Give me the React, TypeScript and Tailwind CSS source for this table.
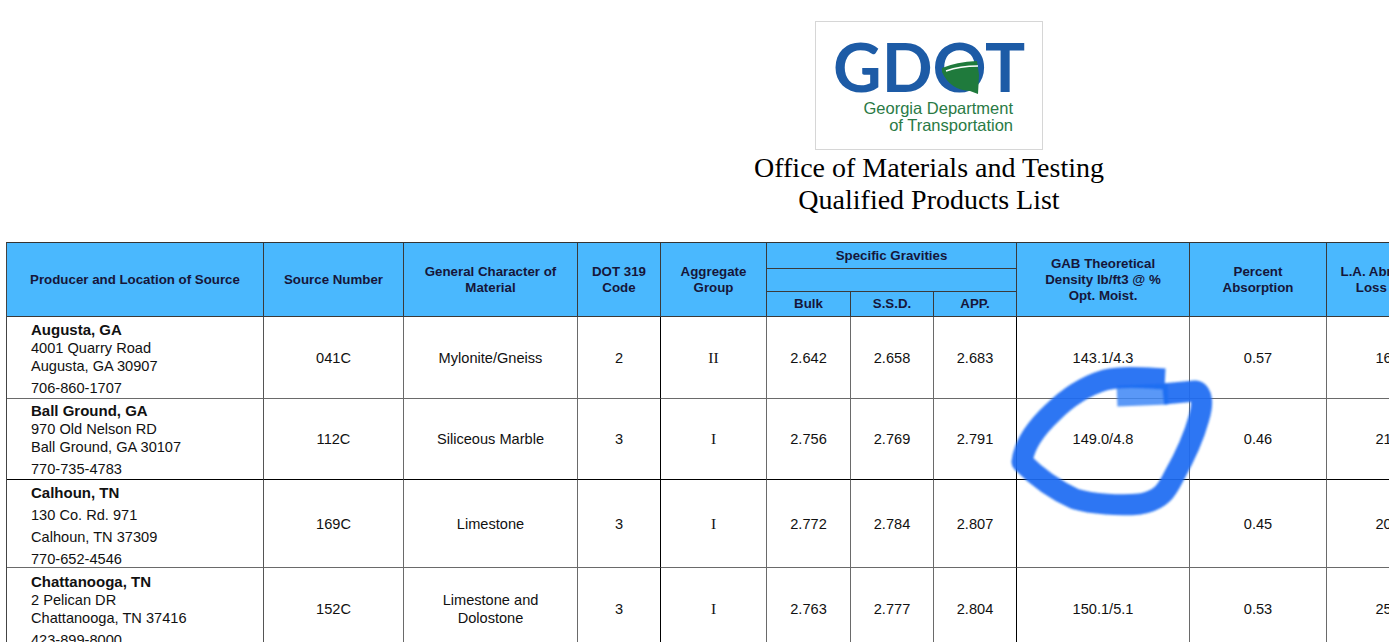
import React from "react";

type Row = {
  name: string;
  lines: string[];
  phone: string;
  src: string;
  mat: React.ReactNode;
  dot: string;
  grp: string;
  bulk: string;
  ssd: string;
  app: string;
  gab: string;
  abs: string;
  la: string;
  wrap: string;
  phoneCls: string;
};

const rows: Row[] = [
  {
    name: "Augusta, GA",
    lines: ["4001 Quarry Road", "Augusta, GA 30907"],
    phone: "706-860-1707",
    src: "041C",
    mat: "Mylonite/Gneiss",
    dot: "2",
    grp: "II",
    bulk: "2.642",
    ssd: "2.658",
    app: "2.683",
    gab: "143.1/4.3",
    abs: "0.57",
    la: "16",
    wrap: "pt-[4px] leading-[18px]",
    phoneCls: "mt-[4px]",
  },
  {
    name: "Ball Ground, GA",
    lines: ["970 Old Nelson RD", "Ball Ground, GA 30107"],
    phone: "770-735-4783",
    src: "112C",
    mat: "Siliceous Marble",
    dot: "3",
    grp: "I",
    bulk: "2.756",
    ssd: "2.769",
    app: "2.791",
    gab: "149.0/4.8",
    abs: "0.46",
    la: "21",
    wrap: "pt-[3px] leading-[18px]",
    phoneCls: "mt-[4px]",
  },
  {
    name: "Calhoun, TN",
    lines: ["130 Co. Rd. 971", "Calhoun, TN 37309"],
    phone: "770-652-4546",
    src: "169C",
    mat: "Limestone",
    dot: "3",
    grp: "I",
    bulk: "2.772",
    ssd: "2.784",
    app: "2.807",
    gab: "",
    abs: "0.45",
    la: "20",
    wrap: "pt-[2px] leading-[22px]",
    phoneCls: "",
  },
  {
    name: "Chattanooga, TN",
    lines: ["2 Pelican DR", "Chattanooga, TN 37416"],
    phone: "423-899-8000",
    src: "152C",
    mat: (
      <>
        Limestone and
        <br />
        Dolostone
      </>
    ),
    dot: "3",
    grp: "I",
    bulk: "2.763",
    ssd: "2.777",
    app: "2.804",
    gab: "150.1/5.1",
    abs: "0.53",
    la: "25",
    wrap: "pt-[5px] leading-[18px]",
    phoneCls: "mt-[4px]",
  },
];

const hdr =
  "flex items-center justify-center text-center bg-[#4ab8fe] border-r border-b border-r-[#3a3a3a] border-b-[#3a3a3a] text-[#16163a] font-bold text-[13.3px] leading-[16px]";

function HeaderCells() {
  return (
    <>
      <div className={`${hdr} row-span-3`}>Producer and Location of Source</div>
      <div className={`${hdr} row-span-3`}>Source Number</div>
      <div className={`${hdr} row-span-3`}>
        General Character of
        <br />
        Material
      </div>
      <div className={`${hdr} row-span-3`}>
        DOT 319
        <br />
        Code
      </div>
      <div className={`${hdr} row-span-3`}>
        Aggregate
        <br />
        Group
      </div>
      <div className={`${hdr} col-span-3`}>Specific Gravities</div>
      <div className={`${hdr} row-span-3`}>
        GAB Theoretical
        <br />
        Density lb/ft3 @ %
        <br />
        Opt. Moist.
      </div>
      <div className={`${hdr} row-span-3`}>
        Percent
        <br />
        Absorption
      </div>
      <div className={`${hdr} row-span-3`}>
        L.A. Abrasion
        <br />
        Loss (%)
      </div>
      <div className={`${hdr} col-span-3`}></div>
      <div className={hdr}>Bulk</div>
      <div className={hdr}>S.S.D.</div>
      <div className={hdr}>APP.</div>
    </>
  );
}

function BodyRow({ r, i }: { r: Row; i: number }) {
  const bottom = i === 1 ? "border-b-black" : "border-b-[#6a6a6a]";
  const cell = (col: number) =>
    `border-r border-b ${bottom} ${
      col === 3 || col === 7 ? "border-r-black" : "border-r-[#6a6a6a]"
    } flex items-center justify-center text-center text-[14.6px] leading-[18px] text-[#111]`;
  const values: React.ReactNode[] = [r.src, r.mat, r.dot, r.grp, r.bulk, r.ssd, r.app, r.gab, r.abs, r.la];
  return (
    <>
      <div className={`border-r border-b ${bottom} border-r-[#555] pl-[24px] text-[#111] ${r.wrap} overflow-hidden`}>
        <div className="font-bold text-[15px]">{r.name}</div>
        {r.lines.map((l) => (
          <div key={l} className="text-[14.6px]">
            {l}
          </div>
        ))}
        <div className={`text-[14.6px] ${r.phoneCls}`}>{r.phone}</div>
      </div>
      {values.map((v, k) => (
        <div key={k} className={cell(k + 1)}>
          {k === 3 ? (
            <span className="font-['Liberation_Serif',serif] text-[15.5px]">{v}</span>
          ) : (
            v
          )}
        </div>
      ))}
    </>
  );
}

export default function App() {
  return (
    <div className="w-screen h-screen overflow-hidden bg-white font-['Liberation_Sans',Arial,sans-serif]">
      <div className="relative w-[1858px]">
        <div className="pt-[21px] flex justify-center">
          <div className="relative w-[228px] h-[129px] border border-[#d6d6d6] bg-white">
            <div className="pl-[17px] pt-[20px]">
              <div className="font-['Lato',sans-serif] font-bold text-[67px] leading-[48px] text-[#1d5ba6] whitespace-nowrap">
                GDOT
              </div>
              <div className="mt-[10px] pr-[29px] text-right font-['Liberation_Sans',Arial,sans-serif] text-[16.5px] leading-[17px] text-[#2a7a45]">
                Georgia Department
                <br />
                of Transportation
              </div>
            </div>
            <svg
              className="absolute left-0 top-0"
              width="226"
              height="127"
              viewBox="816 22 226 127"
            >
              <path
                d="M942,68 Q956,62 977,61 L979,75 L978,94 L970,91 Q950,90 942,72 Z"
                fill="#1f7a3c"
              />
              <path d="M946,71 Q960,66 978,66" stroke="#ffffff" strokeWidth="1.4" fill="none" />
            </svg>
          </div>
        </div>
        <div className="mt-[2px] text-center font-['Liberation_Serif',serif] text-[28px] leading-[32px] text-black">
          Office of Materials and Testing
          <br />
          Qualified Products List
        </div>
        <div className="mt-[26px] ml-[6px] w-max grid grid-cols-[257px_140px_174px_83px_106px_84px_83px_83px_173px_137px_114px] grid-rows-[26px_23px_25px_82px_81px_88px_82px] border-l border-t border-l-[#444] border-t-[#333]">
          <HeaderCells />
          {rows.map((r, i) => (
            <BodyRow key={i} r={r} i={i} />
          ))}
        </div>
        <svg
          className="absolute left-0 top-0 pointer-events-none"
          width="1389"
          height="642"
          viewBox="0 0 1389 642"
        >
          <defs>
            <filter id="soft" x="-10%" y="-10%" width="120%" height="120%">
              <feGaussianBlur stdDeviation="0.9" />
            </filter>
          </defs>
          <g filter="url(#soft)" fill="none" strokeLinejoin="round">
            <path
              d="M1117,396 L1168,394"
              stroke="#3d86f6"
              strokeWidth="21"
              opacity="0.85"
            />
            <path
              d="M1163,394 L1195,391 C1203,392 1203,405 1199,418 C1193,440 1183,460 1174,476 C1167,490 1162,500 1140,504 C1120,506 1092,504 1075,499 C1055,490 1035,475 1022,462 C1024,445 1036,428 1052,413 C1068,397 1085,386 1105,380 C1125,376 1145,378 1165,379"
              stroke="#1b6cf2"
              strokeWidth="21"
              opacity="0.93"
            />
          </g>
        </svg>
      </div>
    </div>
  );
}
